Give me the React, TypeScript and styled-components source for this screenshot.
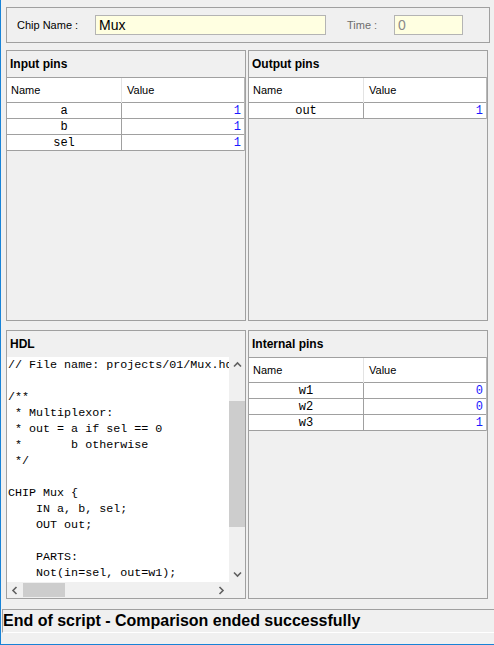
import React from 'react';
import styled, { createGlobalStyle } from 'styled-components';

const Global = createGlobalStyle`
  html, body { margin: 0; padding: 0; background: #f0f0f0; }
  body { font-family: "Liberation Sans", Arial, sans-serif; }
`;

const Window = styled.div`
  width: 494px;
  height: 645px;
  box-sizing: border-box;
  border-left: 1px solid #1883d7;
  border-bottom: 1px solid #1883d7;
  background: #f0f0f0;
  display: flex;
  flex-direction: column;
  overflow: hidden;
`;

const Body = styled.div`
  padding: 7px 0 0 5px;
  display: flex;
  flex-direction: column;
`;

const ChipBar = styled.div`
  width: 484px;
  height: 36px;
  box-sizing: border-box;
  border: 1px solid #a0a0a0;
  display: flex;
  align-items: center;
  padding-left: 10px;
`;

const Label = styled.span<{ $w: number; $muted?: boolean }>`
  width: ${p => p.$w}px;
  font-size: 11px;
  color: ${p => (p.$muted ? '#6d6d6d' : '#000')};
  flex: none;
`;

const Field = styled.div<{ $w: number; $muted?: boolean }>`
  width: ${p => p.$w}px;
  height: 20px;
  box-sizing: border-box;
  border: 1px solid #b4b4b4;
  background: #ffffe1;
  font-size: 14px;
  line-height: 18px;
  padding-left: 3px;
  color: ${p => (p.$muted ? '#8a8a8a' : '#000')};
  flex: none;
  margin-right: ${p => (p.$muted ? 0 : 21)}px;
`;

const Panels = styled.div`
  margin-top: 7px;
  display: grid;
  grid-template-columns: 240px 240px;
  grid-template-rows: 271px 269px;
  column-gap: 2px;
  row-gap: 9px;
`;

const Panel = styled.div`
  border: 1px solid #a0a0a0;
  box-sizing: border-box;
  display: flex;
  flex-direction: column;
  overflow: hidden;
  background: #f0f0f0;
`;

const PanelTitle = styled.div`
  height: 26px;
  line-height: 26px;
  padding-left: 3px;
  font-weight: bold;
  font-size: 12px;
  color: #000;
  flex: none;
`;

const Table = styled.div`
  border-top: 1px solid #a0a0a0;
  border-right: 1px solid #b8b8b8;
`;

const HeaderRow = styled.div`
  display: grid;
  grid-template-columns: 115px 1fr;
  height: 25px;
  box-sizing: border-box;
  background: #fff;
  border-bottom: 1px solid #a0a0a0;
`;

const HeaderCell = styled.div<{ $first?: boolean }>`
  font-size: 11px;
  line-height: 25px;
  padding-left: ${p => (p.$first ? 4 : 5)}px;
  color: #000;
  border-right: ${p => (p.$first ? '1px solid #e3e3e3' : 'none')};
`;

const Row = styled.div`
  display: grid;
  grid-template-columns: 115px 1fr;
  height: 16px;
  box-sizing: border-box;
  background: #fff;
  border-bottom: 1px solid #a0a0a0;
`;

const NameCell = styled.div`
  font-family: "Liberation Mono", "Courier New", monospace;
  font-size: 12px;
  line-height: 16px;
  text-align: center;
  color: #000;
  border-right: 1px solid #a0a0a0;
`;

const ValueCell = styled.div`
  font-family: "Liberation Mono", "Courier New", monospace;
  font-size: 12px;
  line-height: 16px;
  text-align: right;
  padding-right: 3px;
  color: #1a1aff;
`;

const HdlBody = styled.div`
  flex: 1;
  display: grid;
  grid-template-columns: 1fr 16px;
  grid-template-rows: 1fr 16px;
  min-height: 0;
`;

const Code = styled.pre`
  margin: 0;
  background: #fff;
  overflow: hidden;
  white-space: pre;
  font-family: "Liberation Mono", "Courier New", monospace;
  font-size: 11.7px;
  line-height: 16px;
  padding-left: 1px;
  color: #000;
`;

const VScroll = styled.div`
  background: #f0f0f0;
  display: flex;
  flex-direction: column;
`;

const HScroll = styled.div`
  background: #f0f0f0;
  display: flex;
  flex-direction: row;
  align-items: stretch;
`;

const ArrowBtn = styled.div<{ $size: number }>`
  flex: none;
  width: ${p => p.$size}px;
  height: ${p => p.$size}px;
  display: flex;
  align-items: center;
  justify-content: center;
`;

const Spacer = styled.div<{ $size: number }>`
  flex: none;
  width: ${p => p.$size}px;
  height: ${p => p.$size}px;
`;

const Fill = styled.div`
  flex: 1;
`;

const VThumb = styled.div`
  flex: none;
  height: 126px;
  background: #cdcdcd;
`;

const HThumb = styled.div`
  flex: none;
  width: 42px;
  margin: 1px 0;
  background: #cdcdcd;
`;

const Corner = styled.div`
  background: #f0f0f0;
`;

const Status = styled.div`
  margin: 10px 0 0 1px;
  height: 24px;
  box-sizing: border-box;
  border-top: 1px solid #a0a0a0;
  border-left: 1px solid #a0a0a0;
  border-bottom: 1px solid #fff;
  font-family: "Liberation Sans", Arial, sans-serif;
  font-weight: bold;
  font-size: 16px;
  line-height: 22px;
  color: #000;
  white-space: nowrap;
`;

type Pin = { name: string; value: string };

const PinPanel = ({ title, pins }: { title: string; pins: Pin[] }) => (
  <Panel>
    <PanelTitle>{title}</PanelTitle>
    <Table>
      <HeaderRow>
        <HeaderCell $first>Name</HeaderCell>
        <HeaderCell>Value</HeaderCell>
      </HeaderRow>
      {pins.map(p => (
        <Row key={p.name}>
          <NameCell>{p.name}</NameCell>
          <ValueCell>{p.value}</ValueCell>
        </Row>
      ))}
    </Table>
  </Panel>
);

const Chevron = ({ dir }: { dir: 'up' | 'down' | 'left' | 'right' }) => {
  const pts: Record<string, string> = {
    up: '1,5.5 4.5,2 8,5.5',
    down: '1,2.5 4.5,6 8,2.5',
    left: '5.5,1 2,4.5 5.5,8',
    right: '2.5,1 6,4.5 2.5,8',
  };
  return (
    <svg width="9" height="9" viewBox="0 0 9 9">
      <polyline points={pts[dir]} fill="none" stroke="#606060" strokeWidth="1.6" />
    </svg>
  );
};

const code = `// File name: projects/01/Mux.hdl

/**
 * Multiplexor:
 * out = a if sel == 0
 *       b otherwise
 */

CHIP Mux {
    IN a, b, sel;
    OUT out;

    PARTS:
    Not(in=sel, out=w1);`;

export default function App() {
  return (
    <>
      <Global />
      <Window>
        <Body>
          <ChipBar>
            <Label $w={78}>Chip Name :</Label>
            <Field $w={231}>Mux</Field>
            <Label $w={47} $muted>Time :</Label>
            <Field $w={69} $muted>0</Field>
          </ChipBar>
          <Panels>
            <PinPanel
              title="Input pins"
              pins={[
                { name: 'a', value: '1' },
                { name: 'b', value: '1' },
                { name: 'sel', value: '1' },
              ]}
            />
            <PinPanel title="Output pins" pins={[{ name: 'out', value: '1' }]} />
            <Panel>
              <PanelTitle>HDL</PanelTitle>
              <HdlBody>
                <Code>{code}</Code>
                <VScroll>
                  <ArrowBtn $size={16}><Chevron dir="up" /></ArrowBtn>
                  <Spacer $size={28} />
                  <VThumb />
                  <Fill />
                  <ArrowBtn $size={16}><Chevron dir="down" /></ArrowBtn>
                </VScroll>
                <HScroll>
                  <ArrowBtn $size={16}><Chevron dir="left" /></ArrowBtn>
                  <HThumb />
                  <Fill />
                  <ArrowBtn $size={16}><Chevron dir="right" /></ArrowBtn>
                </HScroll>
                <Corner />
              </HdlBody>
            </Panel>
            <PinPanel
              title="Internal pins"
              pins={[
                { name: 'w1', value: '0' },
                { name: 'w2', value: '0' },
                { name: 'w3', value: '1' },
              ]}
            />
          </Panels>
        </Body>
        <Status>End of script - Comparison ended successfully</Status>
      </Window>
    </>
  );
}
